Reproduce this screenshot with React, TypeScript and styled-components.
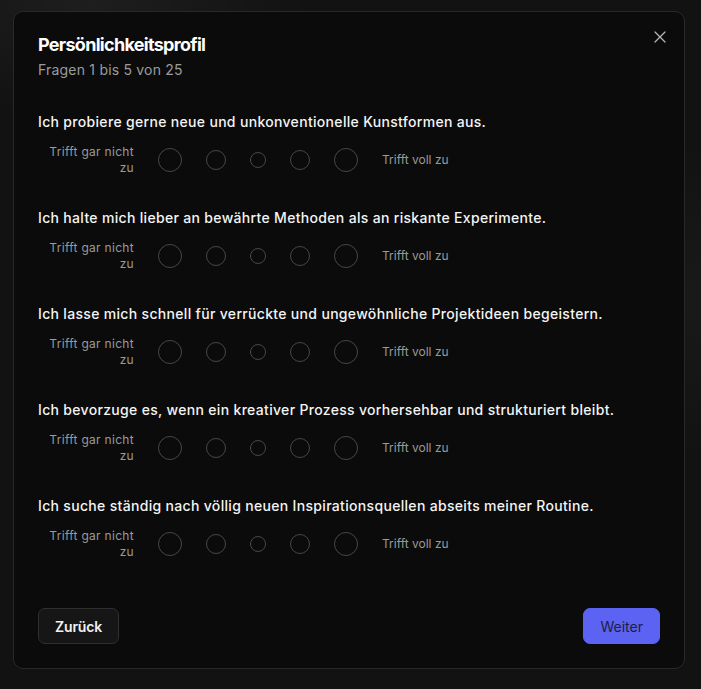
import React from "react";
import styled, { createGlobalStyle } from "styled-components";
import { X } from "lucide-react";

const GlobalStyle = createGlobalStyle`
  html, body { margin: 0; padding: 0; }
  body {
    background: #121212;
    font-family: Inter, "Open Sans", sans-serif;
    color: #f2f2f2;
    -webkit-font-smoothing: antialiased;
  }
  * { box-sizing: border-box; }
`;

const Page = styled.div`
  min-height: 689px;
  padding: 11px 16px 20px 13px;
  background:
    radial-gradient(ellipse 220px 120px at 90px 0px, rgba(255,255,255,0.05), transparent),
    radial-gradient(ellipse 200px 160px at 701px 300px, rgba(255,255,255,0.03), transparent),
    #121212;
`;

const Dialog = styled.div`
  position: relative;
  background: #0b0b0b;
  border: 1px solid #292929;
  border-radius: 10px;
  padding: 24px;
  display: flex;
  flex-direction: column;
`;

const CloseButton = styled.button`
  position: absolute;
  top: 15px;
  right: 14px;
  width: 20px;
  height: 20px;
  padding: 0;
  border: none;
  background: transparent;
  color: #b5b5b5;
  display: flex;
  align-items: center;
  justify-content: center;
  cursor: pointer;
`;

const Header = styled.div`
  display: flex;
  flex-direction: column;
  gap: 6px;
`;

const Title = styled.h2`
  margin: 0;
  font-size: 18px;
  line-height: 18px;
  font-weight: 700;
  letter-spacing: -0.7px;
  color: #ffffff;
`;

const Subtitle = styled.p`
  margin: 0;
  font-size: 14px;
  line-height: 20px;
  letter-spacing: 0.2px;
  color: #9b9b9b;
`;

const Questions = styled.div`
  margin-top: 32px;
  display: flex;
  flex-direction: column;
  gap: 32px;
`;

const Question = styled.div`
  display: flex;
  flex-direction: column;
  gap: 12px;
`;

const QuestionText = styled.p`
  margin: 0;
  font-size: 14px;
  line-height: 20px;
  font-weight: 500;
  letter-spacing: 0.32px;
  color: #f4f4f4;
`;

const Scale = styled.div`
  display: flex;
  align-items: center;
  gap: 24px;
  height: 32px;
`;

const ScaleLabel = styled.span<{ $align: "left" | "right" }>`
  width: ${(p) => (p.$align === "right" ? "96px" : "auto")};
  text-align: ${(p) => p.$align};
  font-size: 12px;
  line-height: 16px;
  letter-spacing: ${(p) => (p.$align === "right" ? "0.3px" : "0")};
  color: #9a9a9a;
`;

const Options = styled.div`
  display: flex;
  align-items: center;
  gap: 24px;
`;

const Option = styled.button<{ $size: number }>`
  width: ${(p) => p.$size}px;
  height: ${(p) => p.$size}px;
  border-radius: 50%;
  border: 1px solid #474747;
  background: transparent;
  padding: 0;
  cursor: pointer;
`;

const Footer = styled.div`
  margin-top: 48px;
  display: flex;
  justify-content: space-between;
  align-items: center;
`;

const Button = styled.button<{ $primary?: boolean }>`
  height: 36px;
  padding: 0 16px;
  border-radius: 7px;
  font-family: Inter, sans-serif;
  font-size: 14px;
  cursor: pointer;
  border: 1px solid ${(p) => (p.$primary ? "#5c62f2" : "#2f2f2f")};
  background: ${(p) => (p.$primary ? "#5c62f2" : "#161616")};
  color: ${(p) => (p.$primary ? "#1e1e44" : "#f2f2f2")};
  font-weight: ${(p) => (p.$primary ? 400 : 600)};
  letter-spacing: ${(p) => (p.$primary ? "0" : "-0.15px")};
`;

const questions = [
  "Ich probiere gerne neue und unkonventionelle Kunstformen aus.",
  "Ich halte mich lieber an bewährte Methoden als an riskante Experimente.",
  "Ich lasse mich schnell für verrückte und ungewöhnliche Projektideen begeistern.",
  "Ich bevorzuge es, wenn ein kreativer Prozess vorhersehbar und strukturiert bleibt.",
  "Ich suche ständig nach völlig neuen Inspirationsquellen abseits meiner Routine.",
];

const sizes = [24, 20, 16, 20, 24];

export default function App() {
  return (
    <>
      <GlobalStyle />
      <Page>
        <Dialog>
          <CloseButton aria-label="Schließen">
            <X size={20} strokeWidth={1.5} />
          </CloseButton>
          <Header>
            <Title>Persönlichkeitsprofil</Title>
            <Subtitle>Fragen 1 bis 5 von 25</Subtitle>
          </Header>
          <Questions>
            {questions.map((q) => (
              <Question key={q}>
                <QuestionText>{q}</QuestionText>
                <Scale>
                  <ScaleLabel $align="right">Trifft gar nicht zu</ScaleLabel>
                  <Options>
                    {sizes.map((s, i) => (
                      <Option key={i} $size={s} aria-label={`Option ${i + 1}`} />
                    ))}
                  </Options>
                  <ScaleLabel $align="left">Trifft voll zu</ScaleLabel>
                </Scale>
              </Question>
            ))}
          </Questions>
          <Footer>
            <Button>Zurück</Button>
            <Button $primary>Weiter</Button>
          </Footer>
        </Dialog>
      </Page>
    </>
  );
}
